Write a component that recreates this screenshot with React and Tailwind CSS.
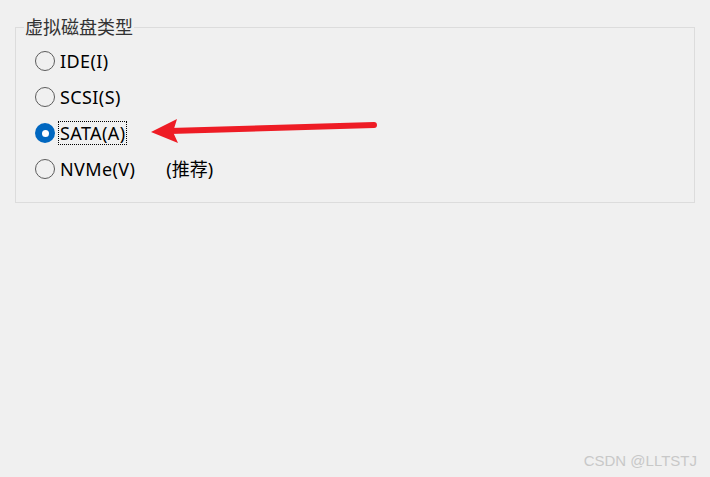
import React, { useState } from 'react';

const options = [
  { id: 'ide', label: 'IDE(I)' },
  { id: 'scsi', label: 'SCSI(S)' },
  { id: 'sata', label: 'SATA(A)' },
  { id: 'nvme', label: 'NVMe(V)', note: '(推荐)' },
];

const Radio = ({ checked }) => (
  <span className="flex h-5 w-5 shrink-0 items-center justify-center">
    {checked ? (
      <span className="flex h-5 w-5 items-center justify-center rounded-full bg-[#0067c0]">
        <span className="h-[7px] w-[7px] rounded-full bg-white" />
      </span>
    ) : (
      <span className="h-5 w-5 rounded-full border border-[#5c5c5c] bg-[#f0f0f0]" />
    )}
  </span>
);

export default function App() {
  const [value, setValue] = useState('sata');

  return (
    <div className="relative h-[477px] w-[710px] overflow-hidden bg-[#f0f0f0] font-['Noto_Sans','Noto_Sans_CJK_SC',sans-serif] text-black">
      <div className="px-[15px] pt-[18px]">
        <fieldset className="h-[185px] border border-[#dcdcdc] pl-[19px] pr-0 pb-0 pt-0">
          <legend className="-ml-[11px] px-[1px] text-[18px] leading-[18px] text-[#333]">虚拟磁盘类型</legend>
          <div className="mt-[7px] flex flex-col">
            {options.map((opt) => (
              <label
                key={opt.id}
                onClick={() => setValue(opt.id)}
                className="flex h-[36px] cursor-default items-center gap-[3px]"
              >
                <Radio checked={value === opt.id} />
                <span
                  className={
                    value === opt.id
                      ? 'border border-dotted border-black px-[1px] text-[18px] leading-[22px] tracking-[0.4px]'
                      : 'border border-transparent px-[1px] text-[18px] leading-[22px] tracking-[0.4px]'
                  }
                >
                  {opt.label}
                </span>
                {opt.note && <span className="ml-[26px] text-[18px] leading-[22px]">{opt.note}</span>}
              </label>
            ))}
          </div>
        </fieldset>
      </div>

      {/* annotation arrow */}
      <svg className="absolute left-0 top-0" width="710" height="477">
        <line x1="374" y1="125" x2="170" y2="131" stroke="#ee1c25" strokeWidth="6" strokeLinecap="round" />
        <polygon points="151,132 177,119 173,132 178,143" fill="#ee1c25" />
      </svg>

      <div className="absolute bottom-[5px] right-[13px] font-['Liberation_Sans',sans-serif] text-[15px] text-[#c8c8c8]">
        CSDN @LLTSTJ
      </div>
    </div>
  );
}
